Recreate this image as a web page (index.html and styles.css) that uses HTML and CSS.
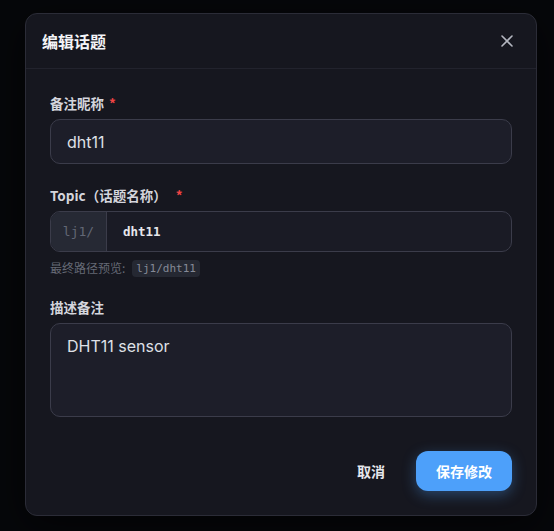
FILE: index.html
```html
<!DOCTYPE html>
<html lang="zh-CN">
<head>
<meta charset="utf-8">
<title>编辑话题</title>
<link rel="stylesheet" href="styles.css">
</head>
<body>
<div class="overlay">
  <div class="modal">
    <div class="modal-header">
      <h2 class="modal-title">编辑话题</h2>
      <button class="close-btn" aria-label="关闭">
        <svg width="14" height="14" viewBox="0 0 14 14"><path d="M2 2 L12 12 M12 2 L2 12" stroke="#b4b7c0" stroke-width="1.6" stroke-linecap="round" fill="none"/></svg>
      </button>
    </div>
    <div class="modal-body">
      <div class="field">
        <label class="label">备注昵称 <span class="req">*</span></label>
        <div class="input big">dht11</div>
      </div>
      <div class="field field-topic">
        <label class="label">Topic（话题名称） <span class="req req-gap">*</span></label>
        <div class="input-group">
          <span class="prefix">lj1/</span>
          <span class="group-input">dht11</span>
        </div>
        <div class="hint">最终路径预览: <code class="chip">lj1/dht11</code></div>
      </div>
      <div class="field field-desc">
        <label class="label">描述备注</label>
        <div class="textarea">DHT11 sensor</div>
      </div>
    </div>
    <div class="modal-footer">
      <button class="btn-cancel">取消</button>
      <button class="btn-save">保存修改</button>
    </div>
  </div>
</div>
</body>
</html>
```
FILE: styles.css
```css
* { box-sizing: border-box; }
html, body { margin: 0; padding: 0; }
body {
  background: #06070a;
  font-family: Inter, "Noto Sans CJK SC", sans-serif;
  color: #e4e5ea;
  width: 554px;
  height: 531px;
  overflow: hidden;
}
.overlay {
  padding: 13px 17px 0 25px;
}
.modal {
  width: 512px;
  height: 503px;
  background: #16171f;
  border: 1px solid #2b2c37;
  border-radius: 12px;
  box-shadow: 0 10px 40px rgba(0,0,0,0.6);
  display: flex;
  flex-direction: column;
}
.modal-header {
  height: 55px;
  border-bottom: 1px solid #22232d;
  display: flex;
  align-items: center;
  justify-content: space-between;
  padding: 0 22px 0 16px;
}
.modal-title {
  margin: 0;
  font-family: "Noto Sans CJK SC", sans-serif;
  font-size: 16px;
  font-weight: 700;
  color: #f4f4f7;
  line-height: 20px;
}
.close-btn {
  background: none;
  border: none;
  padding: 0;
  width: 14px;
  height: 14px;
  display: flex;
}
.modal-body {
  padding: 25px 24px 0 24px;
  flex: 1;
}
.field { display: flex; flex-direction: column; }
.label {
  font-family: "Noto Sans CJK SC", sans-serif;
  font-size: 13.5px;
  font-weight: 700;
  color: #d4d5dc;
  line-height: 18px;
  margin-bottom: 7px;
}
.req { color: #ef4444; margin-left: 2px; }
.req-gap { margin-left: 6px; }
.input {
  height: 45px;
  background: #1d1e29;
  border: 1px solid #3b3c4a;
  border-radius: 10px;
  padding: 0 16px;
  display: flex;
  align-items: center;
  font-size: 16px;
  color: #dfe0e6;
}
.field-topic { margin-top: 22px; }
.input-group {
  height: 41px;
  display: flex;
  border: 1px solid #3b3c4a;
  border-radius: 10px;
  overflow: hidden;
  background: #1a1b25;
}
.prefix {
  width: 56px;
  background: #262934;
  border-right: 1px solid #3b3c4a;
  display: flex;
  align-items: center;
  justify-content: center;
  font-family: "DejaVu Sans Mono", "Liberation Mono", monospace;
  font-size: 13px;
  color: #626775;
}
.group-input {
  flex: 1;
  display: flex;
  align-items: center;
  padding-left: 16px;
  font-family: "DejaVu Sans Mono", "Liberation Mono", monospace;
  font-size: 12.5px;
  font-weight: 700;
  color: #e6e7ec;
}
.hint {
  margin-top: 7px;
  font-family: "Noto Sans CJK SC", sans-serif;
  font-size: 12px;
  line-height: 18px;
  color: #656975;
  display: flex;
  align-items: center;
  gap: 7px;
}
.chip {
  background: #252832;
  border-radius: 4px;
  padding: 1px 4px;
  font-family: "DejaVu Sans Mono", "Liberation Mono", monospace;
  font-size: 11px;
  color: #858a97;
  line-height: 15px;
}
.field-desc { margin-top: 21px; }
.textarea {
  height: 94px;
  background: #1d1e29;
  border: 1px solid #3b3c4a;
  border-radius: 10px;
  padding: 10px 16px;
  font-size: 16px;
  line-height: 24px;
  color: #dfe0e6;
}
.modal-footer {
  display: flex;
  justify-content: flex-end;
  align-items: center;
  gap: 14px;
  padding: 0 24px 24px 24px;
}
.btn-cancel {
  background: none;
  border: none;
  font-family: "Noto Sans CJK SC", sans-serif;
  font-size: 14px;
  font-weight: 700;
  color: #e6e7ec;
  height: 40px;
  padding: 0 17px;
}
.btn-save {
  width: 96px;
  height: 40px;
  background: #4da0fa;
  border: none;
  border-radius: 12px;
  font-family: "Noto Sans CJK SC", sans-serif;
  font-size: 14px;
  font-weight: 700;
  color: #ffffff;
  box-shadow: 0 4px 14px rgba(77,160,250,0.35);
}
```
